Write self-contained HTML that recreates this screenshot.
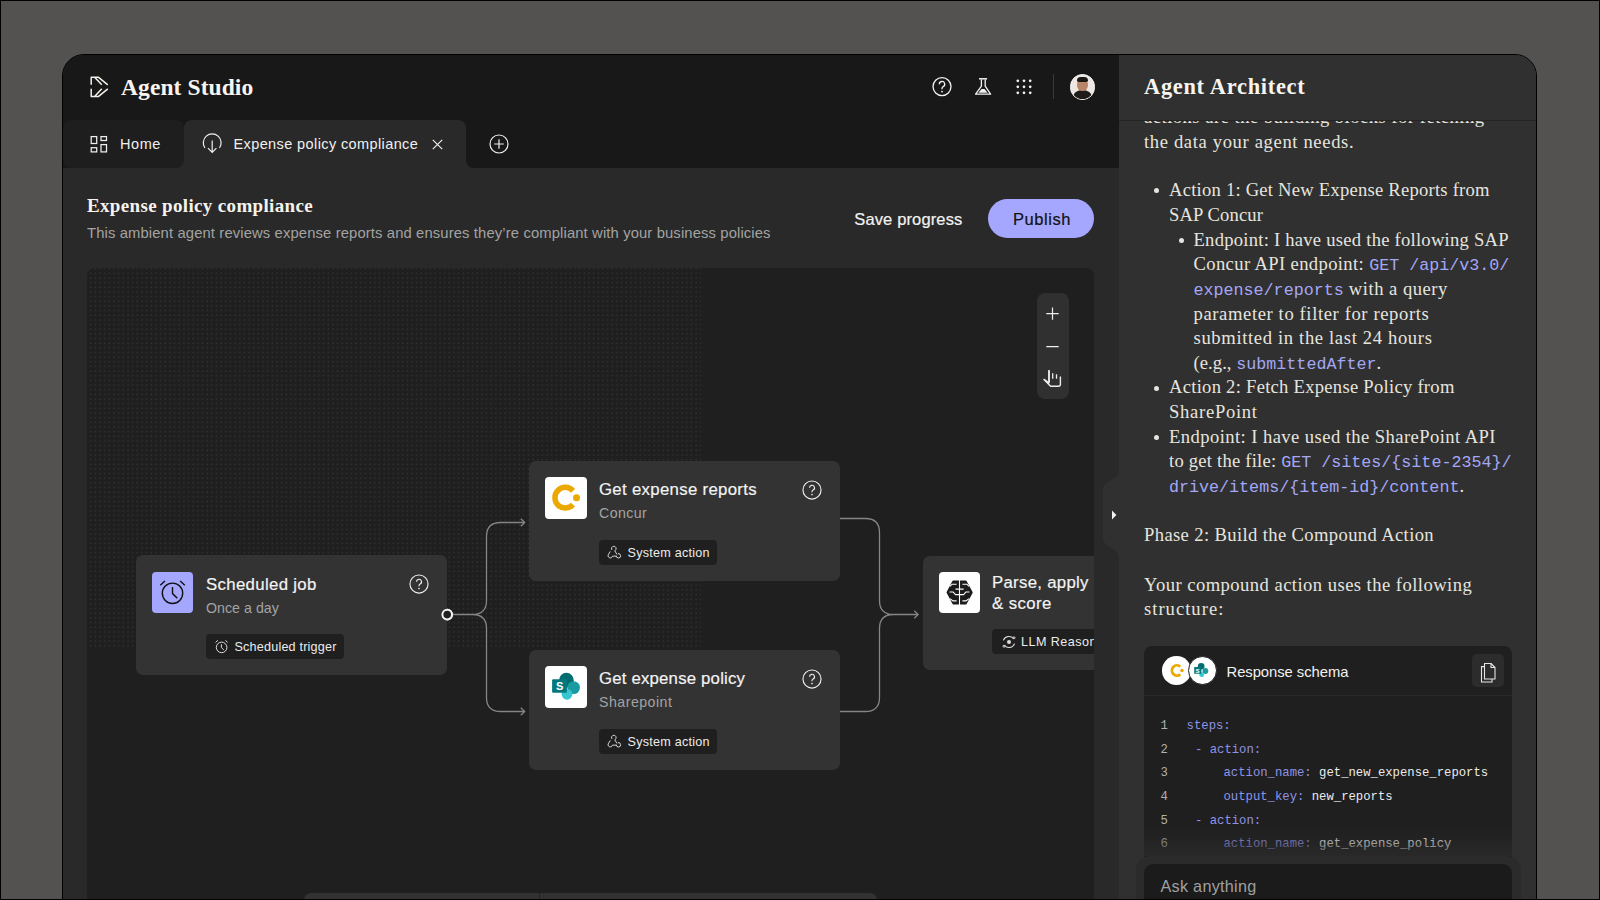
<!DOCTYPE html>
<html><head><meta charset="utf-8">
<style>
*{box-sizing:border-box;margin:0;padding:0}
html,body{width:1600px;height:900px;overflow:hidden;background:#535251}
body{position:relative;font-family:"Liberation Sans",sans-serif;color:#f2f2f2}
.a{position:absolute}
.t{position:absolute;white-space:nowrap;line-height:1}
svg.a{overflow:visible}
</style></head><body>
<div class="a" style="left:0;top:0;width:1600px;height:900px;border:1px solid #000;z-index:100"></div>
<div class="a" style="left:62px;top:54px;width:1475px;height:900px;border:1px solid #000;border-radius:22px;background:#292929"></div>
<div class="a" style="left:63px;top:55px;width:1056px;height:113px;background:#181818;border-radius:21px 0 0 0;"></div>
<div class="a" style="left:1119px;top:55px;width:417px;height:845px;background:#303030;border-radius:0 21px 0 0;"></div>
<svg class="a" style="left:88px;top:74px;" width="24" height="26" viewBox="88 74 24 26" fill="none"><path d="M91.2 84.8V77.3H98.6L107.8 84.8M94.6 77.3L101.8 84.8M91.2 88.8V96.4H98.6L107.8 88.8M94.6 96.4L101.8 88.8" stroke="#f4f1ea" stroke-width="1.5" stroke-linejoin="round"/></svg>
<div class="t" style="left:121.00px;top:75.82px;font-family:'Liberation Serif',serif;font-size:23.5px;color:#f7f5ef;font-weight:700;letter-spacing:0.091px;">Agent Studio</div>
<svg class="a" style="left:930px;top:75px;" width="24" height="24" viewBox="930 75 24 24" fill="none"><circle cx="942" cy="86.6" r="9" stroke="#f2f2f2" stroke-width="1.3"/><path d="M939.3 84.2a2.7 2.7 0 1 1 3.9 2.4c-.8.4-1.2 1-1.2 1.8v.8" stroke="#f2f2f2" stroke-width="1.3"/><circle cx="942" cy="91.6" r=".9" fill="#f2f2f2"/></svg>
<svg class="a" style="left:972px;top:76px;" width="22" height="22" viewBox="972 76 22 22" fill="none"><path d="M979 78.8h8.1" stroke="#f2f2f2" stroke-width="1.5"/><path d="M981.4 79.4v6.7L975.6 94.2h15l-5.4-8.1v-6.7" stroke="#f2f2f2" stroke-width="1.3" stroke-linejoin="round"/><path d="M981.6 88.9h2.9l3.1 3.8h-9.2z" fill="#f2f2f2"/></svg>
<svg class="a" style="left:1014px;top:78px;" width="20" height="18" viewBox="1014 78 20 18" fill="none"><circle cx="1017.8" cy="80.8" r="1.35" fill="#f2f2f2"/><circle cx="1017.8" cy="86.8" r="1.35" fill="#f2f2f2"/><circle cx="1017.8" cy="92.8" r="1.35" fill="#f2f2f2"/><circle cx="1024" cy="80.8" r="1.35" fill="#f2f2f2"/><circle cx="1024" cy="86.8" r="1.35" fill="#f2f2f2"/><circle cx="1024" cy="92.8" r="1.35" fill="#f2f2f2"/><circle cx="1030.2" cy="80.8" r="1.35" fill="#f2f2f2"/><circle cx="1030.2" cy="86.8" r="1.35" fill="#f2f2f2"/><circle cx="1030.2" cy="92.8" r="1.35" fill="#f2f2f2"/></svg>
<div class="a" style="left:1053px;top:74px;width:1px;height:25px;background:#3a3a3a;"></div>
<div class="a" style="left:1069.6px;top:74.2px;width:25.4px;height:25.4px;border-radius:50%;background:#ede6e2;overflow:hidden;border:1.2px solid #f6f6f6"><div class="a" style="left:2.5px;top:14.6px;width:19px;height:14px;border-radius:50%;background:#1e1b19"></div><div class="a" style="left:6.8px;top:3.6px;width:10.4px;height:12.6px;border-radius:46%;background:#b98568"></div><div class="a" style="left:6.6px;top:2.2px;width:10.8px;height:4.6px;border-radius:5px 5px 2px 2px;background:#1b1816"></div></div>
<div class="a" style="left:160px;top:150px;width:30px;height:18px;background:#292929;"></div>
<div class="a" style="left:63px;top:120px;width:121px;height:48px;background:#1e1e1e;border-radius:8px;"></div>
<div class="a" style="left:184px;top:120px;width:282px;height:80px;background:#292929;border-radius:8px 8px 0 0;"></div>
<div class="a" style="left:466px;top:160px;width:14px;height:8px;background:#292929;"></div>
<div class="a" style="left:466px;top:150px;width:14px;height:18px;background:#181818;border-radius:0 0 0 8px;"></div>
<div class="a" style="left:63px;top:168px;width:1056px;height:732px;background:#292929;"></div>
<svg class="a" style="left:88px;top:134px;" width="22" height="21" viewBox="88 134 22 21" fill="none"><rect x="91.2" y="136.6" width="5.5" height="6.9" stroke="#eee" stroke-width="1.25"/><rect x="101" y="136.6" width="5.5" height="3.9" stroke="#eee" stroke-width="1.25"/><rect x="91.2" y="147.7" width="5.5" height="4.2" stroke="#eee" stroke-width="1.25"/><rect x="101" y="144.6" width="5.5" height="7.3" stroke="#eee" stroke-width="1.25"/></svg>
<div class="t" style="left:120.00px;top:137.33px;font-family:'Liberation Sans',sans-serif;font-size:14.5px;color:#f0f0f0;font-weight:400;letter-spacing:0.551px;">Home</div>
<svg class="a" style="left:200px;top:130px;" width="26" height="26" viewBox="200 130 26 26" fill="none"><path d="M204.9 147.9A8.9 8.9 0 1 1 219.5 147.9" stroke="#f0f0f0" stroke-width="1.2"/><path d="M212.2 140.6V152.4M208 148.2l4.2 4.2 4.2-4.2" stroke="#f0f0f0" stroke-width="1.2"/></svg>
<div class="t" style="left:233.50px;top:137.33px;font-family:'Liberation Sans',sans-serif;font-size:14.5px;color:#f0f0f0;font-weight:400;letter-spacing:0.393px;">Expense policy compliance</div>
<svg class="a" style="left:430px;top:137px;" width="15" height="15" viewBox="430 137 15 15" fill="none"><path d="M432.8 139.8l9.4 9.4M442.2 139.8l-9.4 9.4" stroke="#eee" stroke-width="1.2"/></svg>
<svg class="a" style="left:488px;top:133px;" width="22" height="22" viewBox="488 133 22 22" fill="none"><circle cx="499" cy="144" r="9" stroke="#eee" stroke-width="1.2"/><path d="M499 139.2v9.6M494.2 144h9.6" stroke="#eee" stroke-width="1.2"/></svg>
<div class="t" style="left:87.00px;top:195.99px;font-family:'Liberation Serif',serif;font-size:19px;color:#f5f3ee;font-weight:700;letter-spacing:0.343px;">Expense policy compliance</div>
<div class="t" style="left:87.00px;top:226.27px;font-family:'Liberation Sans',sans-serif;font-size:14.8px;color:#a3a3a3;font-weight:400;letter-spacing:0.125px;">This ambient agent reviews expense reports and ensures they’re compliant with your business policies</div>
<div class="t" style="left:854.30px;top:210.83px;font-family:'Liberation Sans',sans-serif;font-size:16.5px;color:#f2f2f2;font-weight:400;letter-spacing:0.132px;-webkit-text-stroke:0.2px currentColor;">Save progress</div>
<div class="a" style="left:988px;top:199px;width:106px;height:39px;background:#a5a7fe;border-radius:20px;"></div>
<div class="t" style="left:1012.90px;top:210.83px;font-family:'Liberation Sans',sans-serif;font-size:16.5px;color:#111;font-weight:400;letter-spacing:0.583px;-webkit-text-stroke:0.2px currentColor;">Publish</div>
<div class="a" style="left:87px;top:268px;width:1007px;height:632px;background:#1f1f1f;border-radius:8px 8px 0 0;"></div>
<div class="a" style="left:87px;top:268px;width:614px;height:381px;border-radius:8px 0 0 0;background-image:radial-gradient(circle at 1.2px 1.2px,#323232 0.65px,transparent 1.05px);background-size:4.667px 4.667px;background-position:2.6px 4.2px"></div>
<div class="a" style="left:1037px;top:293px;width:32px;height:106px;background:#303030;border-radius:8px;"></div>
<svg class="a" style="left:1040px;top:300px;" width="26" height="92" viewBox="1040 300 26 92" fill="none"><path d="M1052.5 307.4v12.4M1046.3 313.6h12.4M1046.3 346.6h12.4" stroke="#eee" stroke-width="1.2"/><path d="M1049 370.2V382.8L1044 379.4L1050.6 386.2H1058.4Q1060.4 386.2 1060.4 384.2V376.4" stroke="#eee" stroke-width="1.4" stroke-linejoin="round"/><path d="M1049 370.2v12" stroke="#e0e0e0" stroke-width="2"/><path d="M1052.7 373.2V378.8M1056.5 374.2V378.8" stroke="#eee" stroke-width="1.3"/></svg>
<svg class="a" style="left:440px;top:500px;" width="500" height="240" viewBox="440 500 500 240" fill="none"><path d="M452 614.5H472.5Q486.5 614.5 486.5 600.5V536.5Q486.5 522.5 500.5 522.5H524.5M472.5 614.5Q486.5 614.5 486.5 628.5V697.5Q486.5 711.5 500.5 711.5H524.5" stroke="#858585" stroke-width="1.3"/><path d="M520.8 518.8l3.8 3.7-3.8 3.7M520.8 707.8l3.8 3.7-3.8 3.7" stroke="#858585" stroke-width="1.3"/><path d="M840 518.5H865.5Q879.5 518.5 879.5 532.5V600.5Q879.5 614.5 893.5 614.5H918M840 711.5H865.5Q879.5 711.5 879.5 697.5V628.5Q879.5 614.5 893.5 614.5" stroke="#858585" stroke-width="1.3"/><path d="M914.3 610.8l3.8 3.7-3.8 3.7" stroke="#858585" stroke-width="1.3"/><circle cx="447.2" cy="614.6" r="4.8" fill="#1f1f1f" stroke="#f2f2f2" stroke-width="2"/></svg>
<div class="a" style="left:136px;top:555px;width:311px;height:120px;background:#333333;border-radius:7px;"></div>
<div class="a" style="left:152px;top:572px;width:41px;height:41px;background:#a5a7fe;border-radius:4px;"></div>
<svg class="a" style="left:155px;top:575px;" width="36" height="36" viewBox="155 575 36 36" fill="none"><circle cx="172.5" cy="593.3" r="10.2" stroke="#111" stroke-width="1.4"/><path d="M172.5 587v6.6l4.8 4.7M160.3 585.3l4.6-4.3M180.2 581l4.6 4.3" stroke="#111" stroke-width="1.4"/></svg>
<div class="t" style="left:206.00px;top:576.58px;font-family:'Liberation Sans',sans-serif;font-size:16.8px;color:#f4f4f4;font-weight:400;letter-spacing:0.333px;-webkit-text-stroke:0.18px currentColor;">Scheduled job</div>
<div class="t" style="left:206.00px;top:601.08px;font-family:'Liberation Sans',sans-serif;font-size:14.2px;color:#a3a3a3;font-weight:400;letter-spacing:0.033px;">Once a day</div>
<svg class="a" style="left:406.6px;top:572px;" width="24" height="24" viewBox="406.6 572 24 24" fill="none"><circle cx="418.6" cy="584" r="9.05" stroke="#eee" stroke-width="1.15"/><path d="M416.1 581.8a2.5 2.5 0 1 1 3.6 2.25c-.75.4-1.1.95-1.1 1.65v.5" stroke="#eee" stroke-width="1.15"/><circle cx="418.6" cy="588.6" r=".8" fill="#eee"/></svg>
<div class="a" style="left:206px;top:634px;width:138px;height:25px;background:#1f1f1f;border-radius:4px;"></div>

<div class="t" style="left:234.50px;top:641.23px;font-family:'Liberation Sans',sans-serif;font-size:12.6px;color:#ececec;font-weight:400;letter-spacing:0.199px;">Scheduled trigger</div>
<svg class="a" style="left:212px;top:638px;" width="20" height="18" viewBox="212 638 20 18" fill="none"><circle cx="221.6" cy="647.4" r="5.3" stroke="#ddd" stroke-width="1"/><path d="M221.4 644.3v3.3l2.4 2.3M215.6 642.4l2.2-2.1M225.4 640.3l2.2 2.1" stroke="#ddd" stroke-width="1"/></svg>
<div class="a" style="left:529px;top:461px;width:311px;height:120px;background:#333333;border-radius:7px;"></div>
<div class="a" style="left:545px;top:477px;width:41.5px;height:41.5px;background:#fefefe;border-radius:4px;"></div>
<svg class="a" style="left:545px;top:477px;" width="42" height="42" viewBox="545 477 42 42" fill="none"><path d="M573 490.8A10.35 10.35 0 1 0 573 504.6" stroke="#eba900" stroke-width="5.5"/><circle cx="576.5" cy="497.7" r="3.5" fill="#eba900"/></svg>
<div class="t" style="left:599.00px;top:481.88px;font-family:'Liberation Sans',sans-serif;font-size:16.8px;color:#f4f4f4;font-weight:400;letter-spacing:0.306px;-webkit-text-stroke:0.18px currentColor;">Get expense reports</div>
<div class="t" style="left:599.00px;top:506.28px;font-family:'Liberation Sans',sans-serif;font-size:14.2px;color:#a3a3a3;font-weight:400;letter-spacing:0.4px;">Concur</div>
<svg class="a" style="left:800px;top:478px;" width="24" height="24" viewBox="800 478 24 24" fill="none"><circle cx="812" cy="490" r="9.05" stroke="#eee" stroke-width="1.15"/><path d="M809.5 487.8a2.5 2.5 0 1 1 3.6 2.25c-.75.4-1.1.95-1.1 1.65v.5" stroke="#eee" stroke-width="1.15"/><circle cx="812" cy="494.6" r=".8" fill="#eee"/></svg>
<div class="a" style="left:599px;top:540px;width:118px;height:25px;background:#1f1f1f;border-radius:4px;"></div>
<div class="t" style="left:627.60px;top:546.93px;font-family:'Liberation Sans',sans-serif;font-size:12.6px;color:#ececec;font-weight:400;letter-spacing:0.243px;">System action</div>
<svg class="a" style="left:607.2px;top:544.2px" width="16.2" height="16.2" viewBox="0 0 18 18" fill="none"><path d="M5.2 6.2A2.6 2.6 0 1 1 8.6 7.5L10.9 11.3M3.4 8.6L1.9 11.2A2.5 2.5 0 1 0 6.1 13.5H10.2M10.2 13.5A2.5 2.5 0 1 0 12.6 10.6" stroke="#dedede" stroke-width="1.05" stroke-linecap="round"/></svg>
<div class="a" style="left:529px;top:650px;width:311px;height:120px;background:#333333;border-radius:7px;"></div>
<div class="a" style="left:545px;top:666px;width:41.5px;height:41.5px;background:#fefefe;border-radius:4px;"></div>
<svg class="a" style="left:545px;top:666px;" width="42" height="42" viewBox="545 666 42 42" fill="none"><circle cx="566.4" cy="680.2" r="7.35" fill="#036c70"/><circle cx="573.6" cy="687.6" r="6.4" fill="#1a9ba1"/><circle cx="567" cy="694.3" r="5.35" fill="#37c6d0"/><rect x="552.1" y="679.2" width="14.8" height="13.6" rx="1" fill="#03787c"/><text x="556" y="690" font-family="Liberation Sans" font-size="11" font-weight="700" fill="#fff">S</text></svg>
<div class="t" style="left:599.00px;top:670.58px;font-family:'Liberation Sans',sans-serif;font-size:16.8px;color:#f4f4f4;font-weight:400;letter-spacing:0.189px;-webkit-text-stroke:0.18px currentColor;">Get expense policy</div>
<div class="t" style="left:599.00px;top:695.08px;font-family:'Liberation Sans',sans-serif;font-size:14.2px;color:#a3a3a3;font-weight:400;letter-spacing:0.478px;">Sharepoint</div>
<svg class="a" style="left:800px;top:666.5px;" width="24" height="24" viewBox="800 666.5 24 24" fill="none"><circle cx="812" cy="678.5" r="9.05" stroke="#eee" stroke-width="1.15"/><path d="M809.5 676.3a2.5 2.5 0 1 1 3.6 2.25c-.75.4-1.1.95-1.1 1.65v.5" stroke="#eee" stroke-width="1.15"/><circle cx="812" cy="683.1" r=".8" fill="#eee"/></svg>
<div class="a" style="left:599px;top:729px;width:118px;height:25px;background:#1f1f1f;border-radius:4px;"></div>
<div class="t" style="left:627.60px;top:735.93px;font-family:'Liberation Sans',sans-serif;font-size:12.6px;color:#ececec;font-weight:400;letter-spacing:0.243px;">System action</div>
<svg class="a" style="left:607.2px;top:733.2px" width="16.2" height="16.2" viewBox="0 0 18 18" fill="none"><path d="M5.2 6.2A2.6 2.6 0 1 1 8.6 7.5L10.9 11.3M3.4 8.6L1.9 11.2A2.5 2.5 0 1 0 6.1 13.5H10.2M10.2 13.5A2.5 2.5 0 1 0 12.6 10.6" stroke="#dedede" stroke-width="1.05" stroke-linecap="round"/></svg>
<div class="a" style="left:923px;top:556px;width:171px;height:115px;overflow:hidden">
<div class="a" style="left:0px;top:0px;width:240px;height:114px;background:#333333;border-radius:7px;"></div>
<div class="a" style="left:16px;top:16px;width:41px;height:41px;background:#fefefe;border-radius:4px;"></div>
<svg class="a" style="left:16px;top:16px" width="41" height="41" viewBox="938.9 571.6 41 41" fill="none"><path d="M959.4 581H953.2L947.4 592L953.2 603H959.4ZM959.4 581H965.6L971.6 592L965.6 603H959.4Z" fill="#1b1b1b" stroke="#1b1b1b" stroke-width="2" stroke-linejoin="round"/><path d="M959.4 579v26M949.9 586.1L951.9 583.8H956.5M968.9 586.1L966.9 583.8H962.3M955.4 588.7H963.5M949.4 591.6H953L955.4 594.2H963.5L965.8 591.6H969.4M949.9 598.2L952.9 600.5H956.5M968.9 598.2L965.9 600.5H962.3" stroke="#fff" stroke-width="1.1"/></svg>
<div class="t" style="left:69.00px;top:19.28px;font-family:'Liberation Sans',sans-serif;font-size:16.8px;color:#f4f4f4;font-weight:400;letter-spacing:0.284px;-webkit-text-stroke:0.18px currentColor;">Parse, apply policy</div>
<div class="t" style="left:69.00px;top:40.08px;font-family:'Liberation Sans',sans-serif;font-size:16.8px;color:#f4f4f4;font-weight:400;letter-spacing:0.417px;-webkit-text-stroke:0.18px currentColor;">&amp; score</div>
<div class="a" style="left:69px;top:73px;width:131px;height:25px;background:#1f1f1f;border-radius:4px;"></div>
<svg class="a" style="left:78px;top:78px" width="16" height="16" viewBox="0 0 16 16" fill="none"><path d="M12.6 4.6A6 6 0 0 0 2.4 6.4M3.4 11.4a6 6 0 0 0 10.2-1.8" stroke="#ddd" stroke-width="1.1"/><circle cx="8" cy="8" r="2" fill="#ddd"/><circle cx="13" cy="3.8" r="1" stroke="#ddd"/><circle cx="3" cy="12.2" r="1" stroke="#ddd"/></svg>
<div class="t" style="left:98.00px;top:80.43px;font-family:'Liberation Sans',sans-serif;font-size:12.6px;color:#ececec;font-weight:400;letter-spacing:0.45px;">LLM Reasoning</div>
</div>
<svg class="a" style="left:1098px;top:460px;" width="22" height="110" viewBox="1098 460 22 110" fill="none"><path d="M1119 471.5C1119 480 1103 480 1103 490V538C1103 548 1119 548 1119 557.5Z" fill="#303030"/><path d="M1112 510.6l4.4 4.4-4.4 4.4z" fill="#f2f2f2"/></svg>
<svg class="a" style="left:440px;top:606px" width="16" height="16" viewBox="440 606 16 16" fill="none"><circle cx="447.2" cy="614.6" r="4.8" fill="#1f1f1f" stroke="#f2f2f2" stroke-width="2"/></svg>
<div class="t" style="left:1144.00px;top:107.92px;font-family:'Liberation Serif',serif;font-size:18.6px;color:#e6e4df;font-weight:400;letter-spacing:0.487px;">actions are the building blocks for fetching</div>
<div class="t" style="left:1144.00px;top:132.52px;font-family:'Liberation Serif',serif;font-size:18.6px;color:#e6e4df;font-weight:400;letter-spacing:0.64px;">the data your agent needs.</div>
<div class="t" style="left:1169.00px;top:181.22px;font-family:'Liberation Serif',serif;font-size:18.6px;color:#e6e4df;font-weight:400;letter-spacing:0.232px;">Action 1: Get New Expense Reports from</div>
<div class="t" style="left:1169.00px;top:205.92px;font-family:'Liberation Serif',serif;font-size:18.6px;color:#e6e4df;font-weight:400;letter-spacing:0.121px;">SAP Concur</div>
<div class="t" style="left:1193.50px;top:230.52px;font-family:'Liberation Serif',serif;font-size:18.6px;color:#e6e4df;font-weight:400;letter-spacing:0.246px;">Endpoint: I have used the following SAP</div>
<div class="t" style="left:1193.50px;top:255.22px;font-family:'Liberation Serif',serif;font-size:18.6px;color:#e6e4df;font-weight:400;letter-spacing:0.37px;">Concur API endpoint: <span style="font-family:'Liberation Mono',monospace;font-size:16.7px;letter-spacing:0;color:#a4a7f5">GET /api/v3.0/</span></div>
<div class="t" style="left:1193.50px;top:279.82px;font-family:'Liberation Serif',serif;font-size:18.6px;color:#e6e4df;font-weight:400;letter-spacing:0.503px;"><span style="font-family:'Liberation Mono',monospace;font-size:16.7px;letter-spacing:0;color:#a4a7f5">expense/reports</span> with a query</div>
<div class="t" style="left:1193.50px;top:304.52px;font-family:'Liberation Serif',serif;font-size:18.6px;color:#e6e4df;font-weight:400;letter-spacing:0.614px;">parameter to filter for reports</div>
<div class="t" style="left:1193.50px;top:329.12px;font-family:'Liberation Serif',serif;font-size:18.6px;color:#e6e4df;font-weight:400;letter-spacing:0.651px;">submitted in the last 24 hours</div>
<div class="t" style="left:1193.50px;top:353.82px;font-family:'Liberation Serif',serif;font-size:18.6px;color:#e6e4df;font-weight:400;letter-spacing:0.063px;">(e.g., <span style="font-family:'Liberation Mono',monospace;font-size:16.7px;letter-spacing:0;color:#a4a7f5">submittedAfter</span>.</div>
<div class="t" style="left:1169.00px;top:378.42px;font-family:'Liberation Serif',serif;font-size:18.6px;color:#e6e4df;font-weight:400;letter-spacing:0.267px;">Action 2: Fetch Expense Policy from</div>
<div class="t" style="left:1169.00px;top:403.12px;font-family:'Liberation Serif',serif;font-size:18.6px;color:#e6e4df;font-weight:400;letter-spacing:0.709px;">SharePoint</div>
<div class="t" style="left:1169.00px;top:427.72px;font-family:'Liberation Serif',serif;font-size:18.6px;color:#e6e4df;font-weight:400;letter-spacing:0.427px;">Endpoint: I have used the SharePoint API</div>
<div class="t" style="left:1169.00px;top:452.42px;font-family:'Liberation Serif',serif;font-size:18.6px;color:#e6e4df;font-weight:400;letter-spacing:0.22px;">to get the file: <span style="font-family:'Liberation Mono',monospace;font-size:16.7px;letter-spacing:0;color:#a4a7f5">GET /sites/{site-2354}/</span></div>
<div class="t" style="left:1169.00px;top:477.02px;font-family:'Liberation Serif',serif;font-size:18.6px;color:#e6e4df;font-weight:400;letter-spacing:0.22px;"><span style="font-family:'Liberation Mono',monospace;font-size:16.7px;letter-spacing:0;color:#a4a7f5">drive/items/{item-id}/content</span>.</div>
<div class="t" style="left:1144.00px;top:526.32px;font-family:'Liberation Serif',serif;font-size:18.6px;color:#e6e4df;font-weight:400;letter-spacing:0.372px;">Phase 2: Build the Compound Action</div>
<div class="t" style="left:1144.00px;top:575.62px;font-family:'Liberation Serif',serif;font-size:18.6px;color:#e6e4df;font-weight:400;letter-spacing:0.451px;">Your compound action uses the following</div>
<div class="t" style="left:1144.00px;top:600.32px;font-family:'Liberation Serif',serif;font-size:18.6px;color:#e6e4df;font-weight:400;letter-spacing:1.01px;">structure:</div>
<div class="a" style="left:1153.5px;top:188.4px;width:5.0px;height:5.0px;background:#e6e4df;border-radius:50%;"></div>
<div class="a" style="left:1178.5px;top:237.7px;width:5.0px;height:5.0px;background:#e6e4df;border-radius:50%;"></div>
<div class="a" style="left:1153.5px;top:385.6px;width:5.0px;height:5.0px;background:#e6e4df;border-radius:50%;"></div>
<div class="a" style="left:1153.5px;top:434.90000000000003px;width:5.0px;height:5.0px;background:#e6e4df;border-radius:50%;"></div>
<div class="a" style="left:1119px;top:55px;width:417px;height:65px;background:#303030;border-radius:0 21px 0 0;"></div>
<div class="a" style="left:1119px;top:120px;width:417px;height:1px;background:#242424;"></div>
<div class="t" style="left:1144.00px;top:75.74px;font-family:'Liberation Serif',serif;font-size:22.4px;color:#f7f5ef;font-weight:700;letter-spacing:0.714px;">Agent Architect</div>
<div class="a" style="left:1144px;top:646px;width:368px;height:254px;background:#1f1f1f;border-radius:8px 8px 0 0;"></div>
<div class="a" style="left:1144px;top:695px;width:368px;height:1px;background:#2a2a2a;"></div>
<div class="a" style="left:1162px;top:656.2px;width:28.6px;height:28.6px;border-radius:50%;background:#fff"></div>
<svg class="a" style="left:1162px;top:656px;" width="30" height="30" viewBox="1162 656 30 30" fill="none"><path d="M1180.3 666.6A5.1 5.1 0 1 0 1180.3 674.4" stroke="#eba900" stroke-width="2.8"/><circle cx="1182" cy="670.5" r="1.8" fill="#eba900"/></svg>
<div class="a" style="left:1188.1px;top:655.9px;width:29.2px;height:29.2px;border-radius:50%;background:#fff;border:1.6px solid #1f1f1f"></div>
<svg class="a" style="left:1188px;top:656px;" width="30" height="30" viewBox="1188 656 30 30" fill="none"><circle cx="1201.2" cy="666.3" r="3.3" fill="#036c70"/><circle cx="1205.4" cy="671" r="2.9" fill="#1a9ba1"/><circle cx="1201.7" cy="674.7" r="2.4" fill="#37c6d0"/><rect x="1194.2" y="667" width="7.2" height="6.8" rx=".5" fill="#03787c"/><text x="1195.6" y="672.6" font-family="Liberation Sans" font-size="6.2" font-weight="700" fill="#fff">S</text></svg>
<div class="t" style="left:1226.50px;top:664.77px;font-family:'Liberation Sans',sans-serif;font-size:14.8px;color:#f2f2f2;font-weight:400;letter-spacing:-0.043px;">Response schema</div>
<div class="a" style="left:1472px;top:654px;width:32px;height:33px;background:#2c2c2c;border-radius:5px;"></div>
<svg class="a" style="left:1478px;top:660px;" width="20" height="22" viewBox="1478 660 20 22" fill="none"><path d="M1484.5 663.5h6.5l4 4v11.5h-10.5z" stroke="#e6e6e6" stroke-width="1.1" stroke-linejoin="round"/><path d="M1491 663.5v4h4" stroke="#e6e6e6" stroke-width="1.1"/><path d="M1484.5 666.6h-3v15.4h10.5v-3" stroke="#e6e6e6" stroke-width="1.1"/></svg>
<div class="t" style="left:1160.50px;top:720.11px;font-family:'Liberation Mono',monospace;font-size:12.25px;color:#b0b0b0;font-weight:400;">1</div>
<div class="t" style="left:1186.60px;top:720.11px;font-family:'Liberation Mono',monospace;font-size:12.25px;color:#ececec;font-weight:400;"><span style="color:#8f93e6">steps:</span></div>
<div class="t" style="left:1160.50px;top:743.71px;font-family:'Liberation Mono',monospace;font-size:12.25px;color:#b0b0b0;font-weight:400;">2</div>
<div class="t" style="left:1195.00px;top:743.71px;font-family:'Liberation Mono',monospace;font-size:12.25px;color:#ececec;font-weight:400;"><span style="color:#8f93e6">- action:</span></div>
<div class="t" style="left:1160.50px;top:767.31px;font-family:'Liberation Mono',monospace;font-size:12.25px;color:#b0b0b0;font-weight:400;">3</div>
<div class="t" style="left:1223.50px;top:767.31px;font-family:'Liberation Mono',monospace;font-size:12.25px;color:#ececec;font-weight:400;"><span style="color:#8f93e6">action_name:</span> <span style="color:#ececec">get_new_expense_reports</span></div>
<div class="t" style="left:1160.50px;top:790.91px;font-family:'Liberation Mono',monospace;font-size:12.25px;color:#b0b0b0;font-weight:400;">4</div>
<div class="t" style="left:1223.50px;top:790.91px;font-family:'Liberation Mono',monospace;font-size:12.25px;color:#ececec;font-weight:400;"><span style="color:#8f93e6">output_key:</span> <span style="color:#ececec">new_reports</span></div>
<div class="t" style="left:1160.50px;top:814.51px;font-family:'Liberation Mono',monospace;font-size:12.25px;color:#b0b0b0;font-weight:400;">5</div>
<div class="t" style="left:1195.00px;top:814.51px;font-family:'Liberation Mono',monospace;font-size:12.25px;color:#ececec;font-weight:400;"><span style="color:#8f93e6">- action:</span></div>
<div class="t" style="left:1160.50px;top:838.11px;font-family:'Liberation Mono',monospace;font-size:12.25px;color:#b0b0b0;font-weight:400;">6</div>
<div class="t" style="left:1223.50px;top:838.11px;font-family:'Liberation Mono',monospace;font-size:12.25px;color:#ececec;font-weight:400;"><span style="color:#8f93e6">action_name:</span> <span style="color:#ececec">get_expense_policy</span></div>
<div class="a" style="left:1144px;top:828px;width:368px;height:28px;background:linear-gradient(rgba(44,44,44,0),rgba(44,44,44,0.75))"></div>
<div class="a" style="left:1136px;top:856px;width:385px;height:44px;background:#2b2b2b;border-radius:14px 14px 0 0;"></div>
<div class="a" style="left:1144px;top:864px;width:368px;height:36px;background:#1b1b1b;border-radius:9px 9px 0 0;"></div>
<div class="t" style="left:1160.50px;top:878.09px;font-family:'Liberation Sans',sans-serif;font-size:16.2px;color:#a0a0a0;font-weight:400;letter-spacing:0.282px;">Ask anything</div>
<div class="a" style="left:304px;top:893px;width:573px;height:7px;background:#323232;border-radius:10px 10px 0 0;"></div>
<div class="a" style="left:539px;top:893px;width:1px;height:7px;background:#232323;"></div>
</body></html>
